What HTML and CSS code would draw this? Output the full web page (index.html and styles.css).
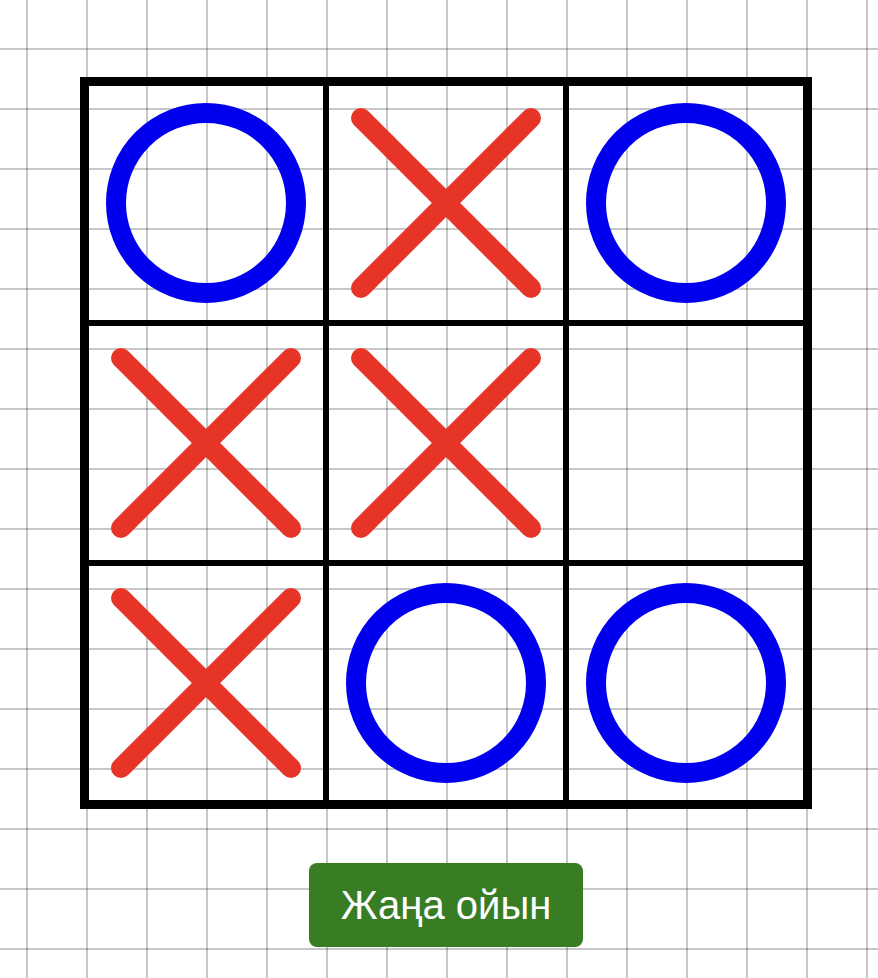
FILE: index.html
```html
<!DOCTYPE html>
<html lang="kk">
<head>
<meta charset="utf-8">
<title>Крестики-нолики</title>
<link rel="stylesheet" href="styles.css">
</head>
<body>
<main class="page">
  <div class="board">
    <div class="cell"><svg class="mark" viewBox="0 0 234 234"><circle class="o" cx="117" cy="117" r="90"/></svg></div>
    <div class="cell"><svg class="mark" viewBox="0 0 234 234"><path class="x" d="M32 32 L202 202 M202 32 L32 202"/></svg></div>
    <div class="cell"><svg class="mark" viewBox="0 0 234 234"><circle class="o" cx="117" cy="117" r="90"/></svg></div>
    <div class="cell"><svg class="mark" viewBox="0 0 234 234"><path class="x" d="M32 32 L202 202 M202 32 L32 202"/></svg></div>
    <div class="cell"><svg class="mark" viewBox="0 0 234 234"><path class="x" d="M32 32 L202 202 M202 32 L32 202"/></svg></div>
    <div class="cell"></div>
    <div class="cell"><svg class="mark" viewBox="0 0 234 234"><path class="x" d="M32 32 L202 202 M202 32 L32 202"/></svg></div>
    <div class="cell"><svg class="mark" viewBox="0 0 234 234"><circle class="o" cx="117" cy="117" r="90"/></svg></div>
    <div class="cell"><svg class="mark" viewBox="0 0 234 234"><circle class="o" cx="117" cy="117" r="90"/></svg></div>
  </div>
  <button class="new-game" type="button">Жаңа ойын</button>
</main>
</body>
</html>
```

FILE: styles.css
```css
html, body {
  margin: 0;
  padding: 0;
}

body {
  min-height: 100vh;
  background-color: #ffffff;
  background-image:
    linear-gradient(to right, rgba(0, 0, 0, 0.22) 0, rgba(0, 0, 0, 0.22) 2px, transparent 2px),
    linear-gradient(to bottom, rgba(0, 0, 0, 0.22) 0, rgba(0, 0, 0, 0.22) 2px, transparent 2px);
  background-size: 60px 60px;
  background-position: 26px 48px;
  font-family: "Liberation Sans", Arial, sans-serif;
}

.page {
  display: flex;
  flex-direction: column;
  align-items: center;
  padding: 77px 0 0 14px;
}

.board {
  display: grid;
  grid-template-columns: repeat(3, 240px);
  grid-template-rows: repeat(3, 240px);
  border: 6px solid #000;
}

.cell {
  box-sizing: border-box;
  border: 3px solid #000;
  display: flex;
  align-items: center;
  justify-content: center;
}

.mark {
  width: 234px;
  height: 234px;
  display: block;
}

.o {
  fill: none;
  stroke: #0000ee;
  stroke-width: 20;
}

.x {
  fill: none;
  stroke: #e63427;
  stroke-width: 20;
  stroke-linecap: round;
}

.new-game {
  margin-top: 54px;
  width: 274px;
  height: 84px;
  border: none;
  border-radius: 8px;
  background: #387c23;
  color: #ffffff;
  font-family: "Liberation Sans", Arial, sans-serif;
  font-size: 40px;
  padding: 0;
  cursor: pointer;
}
```
